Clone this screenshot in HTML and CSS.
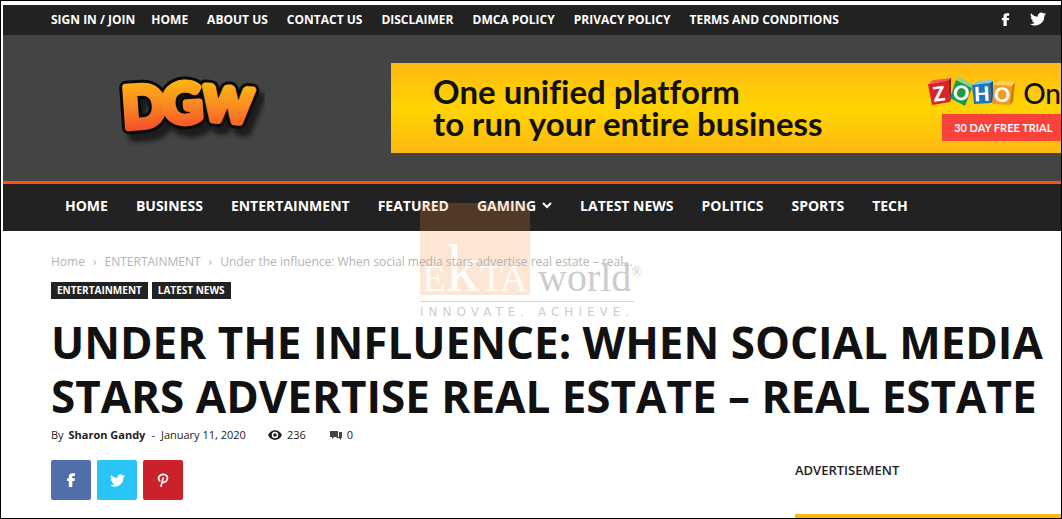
FILE: index.html
```html
<!DOCTYPE html>
<html lang="en">
<head>
    <meta charset="UTF-8">
    <meta name="viewport" content="width=device-width, initial-scale=1.0">
    <title>Under the influence: When social media stars advertise real estate – real estate</title>
    <link rel="stylesheet" href="styles.css">
</head>
<body>
    <svg class="sprite" width="0" height="0" aria-hidden="true">
        <symbol id="facebook" viewBox="0 0 16 16">
            <path d="M5.500 16V9H3.500V6h2V4.200C5.500 1.700 7 .300 9.500.300H12.500V3.500h-1.600C9.800 3.500 9.500 3.900 9.500 4.700V6H12.500l-.400 3H9.500v7z"/>
        </symbol>
        <symbol id="twitter" viewBox="0 0 24 24">
            <path d="M24 4.600a10 10 0 0 1-2.800.800 5 5 0 0 0 2.200-2.700c-1 .600-2 1-3.100 1.200a4.900 4.900 0 0 0-8.400 4.500A14 14 0 0 1 1.700 3.200a4.900 4.900 0 0 0 1.500 6.500 5 5 0 0 1-2.200-.600v.100a4.900 4.900 0 0 0 3.900 4.800 5 5 0 0 1-2.200.100 4.900 4.900 0 0 0 4.600 3.400A9.900 9.900 0 0 1 0 19.500a14 14 0 0 0 21.500-12.400A10 10 0 0 0 24 4.600z"/>
        </symbol>
        <symbol id="pinterest" viewBox="0 0 16 16">
            <path d="M5.800 15 8.200 5.800M4.200 9C1.200 5.500 4 1.500 8.200 1.500c3.400 0 5.200 2.200 4.800 5-.500 4-4.600 5.200-5.800 2.800" fill="none" stroke="currentColor" stroke-width="2" stroke-linecap="round"/>
        </symbol>
    </svg>

    <div class="page">
        <div class="top-bar">
            <nav class="top-menu">
                <a href="#">SIGN IN / JOIN</a>
                <div class="top-links">
                    <a href="#">HOME</a>
                    <a href="#">ABOUT US</a>
                    <a href="#">CONTACT US</a>
                    <a href="#">DISCLAIMER</a>
                    <a href="#">DMCA POLICY</a>
                    <a href="#">PRIVACY POLICY</a>
                    <a href="#">TERMS AND CONDITIONS</a>
                </div>
            </nav>
            <div class="top-social">
                <a href="#" aria-label="Facebook"><svg width="13" height="13"><use href="#facebook"/></svg></a>
                <a href="#" aria-label="Twitter"><svg width="16" height="16"><use href="#twitter"/></svg></a>
            </div>
        </div>

        <header class="header">
            <a class="logo" href="#">
                <svg width="150" height="86" viewBox="0 0 150 86">
                    <defs>
                        <linearGradient id="fire" gradientUnits="userSpaceOnUse" x1="0" y1="14" x2="0" y2="66">
                            <stop offset="0" stop-color="#fdb813"/>
                            <stop offset="0.500" stop-color="#fb8a22"/>
                            <stop offset="1" stop-color="#f4502a"/>
                        </linearGradient>
                        <filter id="soft" x="-20%" y="-20%" width="140%" height="150%">
                            <feGaussianBlur stdDeviation="2"/>
                        </filter>
                        <g id="dgw">
                            <text class="logo-d" x="9" y="63" transform="rotate(-4 9 63)">D</text>
                            <text class="logo-g" x="49" y="59" transform="rotate(-4 49 59)">G</text>
                            <text class="logo-w" x="87" y="54" transform="rotate(5 87 54)">W</text>
                        </g>
                    </defs>
                    <use href="#dgw" class="logo-shadow" x="6" y="8" filter="url(#soft)"/>
                    <use href="#dgw" class="logo-edge"/>
                    <use href="#dgw" class="logo-face"/>
                </svg>
            </a>
            <a class="banner" href="#">
                <span class="banner-text">One unified platform<br>to run your entire business</span>
                <span class="banner-side">
                    <span class="zoho">
                        <svg width="88" height="32" viewBox="0 0 88 32">
                            <path d="M1 6 5 3 24 1 21 5z" fill="#ef5a50"/>
                            <path d="M0 7 20 4 22 25 4 28z" fill="#d8232a"/>
                            <path d="M20 4 23 1 23 22 22 25z" fill="#a3161d"/>
                            <path d="M28 2 31 0 46 8 43 11z" fill="#8ed09a"/>
                            <path d="M28 3 44 11 37 29 22 21z" fill="#169b48"/>
                            <path d="M44 8 50 4 64 3 63 6z" fill="#86c5ee"/>
                            <path d="M44 8 62 6 63 26 46 27z" fill="#1976bd"/>
                            <path d="M62 6 65 4 65 24 63 26z" fill="#10578f"/>
                            <path d="M66 8 70 4 87 5 84 9z" fill="#fbd15c"/>
                            <path d="M66 8 84 9 82 28 64 27z" fill="#f39a1c"/>
                            <path d="M84 9 87 5 85 25 82 28z" fill="#cf7a12"/>
                            <g class="zoho-letters">
                                <text x="5" y="24" transform="rotate(-8 11 17)">Z</text>
                                <text x="25" y="23" transform="rotate(18 33 16)">O</text>
                                <text x="46" y="24" transform="rotate(-3 54 17)">H</text>
                                <text x="66" y="25" transform="rotate(3 74 18)">O</text>
                            </g>
                        </svg>
                        <span class="zoho-one">On</span>
                    </span>
                    <span class="trial">30 DAY FREE TRIAL</span>
                </span>
            </a>
        </header>

        <nav class="main-menu">
            <a href="#">HOME</a>
            <a href="#">BUSINESS</a>
            <a href="#">ENTERTAINMENT</a>
            <a href="#">FEATURED</a>
            <a href="#">GAMING
                <svg width="10" height="7" viewBox="0 0 10 7"><path d="M1 1l4 4 4-4" fill="none" stroke="currentColor" stroke-width="2"/></svg>
            </a>
            <a href="#">LATEST NEWS</a>
            <a href="#">POLITICS</a>
            <a href="#">SPORTS</a>
            <a href="#">TECH</a>
        </nav>

        <main class="article">
            <div class="breadcrumbs">
                <a href="#">Home</a>
                <span class="sep">›</span>
                <a href="#">ENTERTAINMENT</a>
                <span class="sep">›</span>
                <span>Under the influence: When social media stars advertise real estate – real...</span>
            </div>
            <div class="tags">
                <a href="#">ENTERTAINMENT</a>
                <a href="#">LATEST NEWS</a>
            </div>
            <h1>UNDER THE INFLUENCE: WHEN SOCIAL MEDIA STARS ADVERTISE REAL ESTATE – REAL ESTATE</h1>
            <div class="meta">
                <span class="by">By <a href="#">Sharon Gandy</a></span>
                <span class="dash">-</span>
                <span>January 11, 2020</span>
                <span class="count">
                    <svg width="14" height="10" viewBox="0 0 14 10"><path d="M0 5C3-1.500 11-1.500 14 5 11 11.500 3 11.500 0 5z"/><circle cx="7" cy="5" r="3.200" fill="#fff"/><circle cx="7" cy="5" r="1.800"/></svg>
                    236
                </span>
                <span class="count comments">
                    <svg width="12" height="9" viewBox="0 0 12 9"><path d="M0 0h8v6H4L2 8V6H0z"/><path d="M9 1h3v6h-1v2L9 7H6l1-1h2z"/></svg>
                    0
                </span>
            </div>
            <div class="columns">
                <div class="share">
                    <a class="facebook" href="#" aria-label="Share on Facebook"><svg width="14" height="14"><use href="#facebook"/></svg></a>
                    <a class="twitter" href="#" aria-label="Share on Twitter"><svg width="15" height="15"><use href="#twitter"/></svg></a>
                    <a class="pinterest" href="#" aria-label="Share on Pinterest"><svg width="14" height="14"><use href="#pinterest"/></svg></a>
                </div>
                <aside class="sidebar">
                    <h2>ADVERTISEMENT</h2>
                    <div class="side-ad"></div>
                </aside>
            </div>
        </main>

        <div class="watermark">
            <div class="mark-top">
                <span class="mark-box">E<span class="mark-k">k</span>TA</span>
                <span class="mark-world">world<sup>®</sup></span>
            </div>
            <div class="mark-line">INNOVATE. ACHIEVE.</div>
        </div>
    </div>
</body>
</html>
```
FILE: styles.css
```css
* {
    box-sizing: border-box;
}
body {
    margin: 0;
    font-family: "Open Sans", Arial, sans-serif;
    color: #222;
    background: #fff;
}
a {
    color: inherit;
    text-decoration: none;
}
svg {
    display: block;
    fill: currentColor;
}
.sprite {
    position: absolute;
}
.page {
    position: relative;
    height: 100vh;
    padding: 4px 0 0 2px;
    border: 1px solid #000;
    overflow: hidden;
}

/* top bar */
.top-bar {
    display: flex;
    justify-content: space-between;
    align-items: center;
    height: 30px;
    padding: 0 15px 2px 48px;
    background: #222;
    color: #fff;
}
.top-menu,
.top-links {
    display: flex;
    gap: 16px;
    font-size: 12px;
    font-weight: 700;
    white-space: nowrap;
}
.top-links {
    gap: 19px;
}
.top-social {
    display: flex;
    align-items: center;
    gap: 18px;
}

/* header */
.header {
    display: flex;
    align-items: center;
    height: 146px;
    padding-left: 112px;
    background: #444;
}
.logo {
    flex: 0 0 276px;
}
.logo text {
    font-family: "Lato", sans-serif;
    font-weight: 700;
    stroke-linejoin: round;
}
.logo-d {
    font-size: 56px;
}
.logo-g {
    font-size: 54px;
}
.logo-w {
    font-size: 46px;
}
.logo-shadow {
    fill: #1c1c1c;
    stroke: #1c1c1c;
    stroke-width: 13px;
}
.logo-edge {
    fill: #0a0a0a;
    stroke: #0a0a0a;
    stroke-width: 13px;
}
.logo-face {
    fill: url(#fire);
    stroke: url(#fire);
    stroke-width: 7px;
}
.banner {
    flex: 1;
    display: flex;
    justify-content: space-between;
    height: 90px;
    padding-left: 42px;
    overflow: hidden;
    background: linear-gradient(#fdb913, #ffd500 50%, #fdb913);
    color: #111;
    font-family: "Lato", sans-serif;
    font-variant-ligatures: none;
    white-space: nowrap;
}
.banner-text {
    padding-top: 12px;
    font-size: 33px;
    font-weight: 700;
    line-height: 32px;
}
.banner-side {
    flex: 0 0 132px;
    padding-top: 14px;
}
.zoho {
    display: flex;
    gap: 7px;
    height: 32px;
}
.zoho svg {
    flex: none;
}
.zoho-letters {
    fill: #fff;
    font-size: 20px;
    font-weight: 900;
}
.zoho-one {
    font-size: 28px;
    font-weight: 500;
    line-height: 32px;
}
.trial {
    display: block;
    margin: 5px 0 0 14px;
    padding-left: 12px;
    background: #f9423a;
    color: #fff;
    font-size: 11px;
    font-weight: 700;
    line-height: 27px;
}

/* main menu */
.main-menu {
    display: flex;
    align-items: center;
    gap: 28px;
    height: 50px;
    padding: 0 62px 5px;
    border-top: 3px solid #ff4f12;
    background: #222;
    color: #fff;
    font-size: 14px;
    font-weight: 700;
    white-space: nowrap;
}
.main-menu a {
    display: flex;
    align-items: center;
    gap: 6px;
}

/* article */
.article {
    padding: 21px 0 0 48px;
}
.breadcrumbs {
    position: relative;
    z-index: 2;
    display: flex;
    gap: 8px;
    color: #b4b4b4;
    font-size: 12px;
    line-height: 20px;
}
.tags {
    display: flex;
    gap: 4px;
    margin-top: 10px;
}
.tags a {
    padding: 0 6px;
    background: #222;
    color: #fff;
    font-size: 10px;
    font-weight: 700;
    line-height: 17px;
}
h1 {
    margin: 16px 0 0;
    color: #111;
    font-size: 44px;
    font-weight: 700;
    line-height: 54px;
}
.meta {
    display: flex;
    margin-top: 2px;
    font-size: 11px;
    line-height: 20px;
}
.meta a {
    margin-left: 2px;
    font-weight: 700;
}
.dash {
    margin: 0 6px;
}
.count {
    display: flex;
    align-items: center;
    gap: 5px;
    margin-left: 22px;
}
.comments {
    margin-left: 24px;
}
.comments svg {
    color: #444;
}
.columns {
    display: flex;
    justify-content: space-between;
    margin-top: 15px;
}
.share {
    display: flex;
    gap: 6px;
}
.share a {
    display: flex;
    align-items: center;
    justify-content: center;
    width: 40px;
    height: 40px;
    border-radius: 2px;
    color: #fff;
}
.facebook {
    background: #516eab;
}
.twitter {
    background: #29c5f6;
}
.pinterest {
    background: #ca212a;
}
.sidebar {
    flex: 0 0 266px;
}
.sidebar h2 {
    margin: 0 0 34px;
    font-size: 13px;
    font-weight: 600;
    line-height: 20px;
}
.side-ad {
    height: 250px;
    background: #fdb90d;
}

/* watermark laid over the page */
.watermark {
    position: absolute;
    left: 419px;
    top: 202px;
    color: rgba(120, 120, 120, 0.4);
    font-family: "Liberation Serif", serif;
    pointer-events: none;
}
.mark-top {
    display: flex;
    align-items: flex-end;
    padding-bottom: 6px;
    border-bottom: 1px solid rgba(120, 120, 120, 0.3);
}
.mark-box {
    display: flex;
    align-items: baseline;
    justify-content: center;
    width: 110px;
    height: 92px;
    padding-top: 27px;
    background: rgba(247, 140, 60, 0.22);
    color: rgba(255, 255, 255, 0.9);
    font-size: 38px;
}
.mark-k {
    font-size: 68px;
    line-height: 76px;
}
.mark-world {
    padding-left: 8px;
    font-size: 40px;
    line-height: 34px;
}
.mark-world sup {
    margin-right: -10px;
    font-size: 14px;
    line-height: 0;
}
.mark-line {
    font-family: "DejaVu Sans", sans-serif;
    font-size: 12px;
    line-height: 20px;
    letter-spacing: 5px;
    white-space: nowrap;
}
```
